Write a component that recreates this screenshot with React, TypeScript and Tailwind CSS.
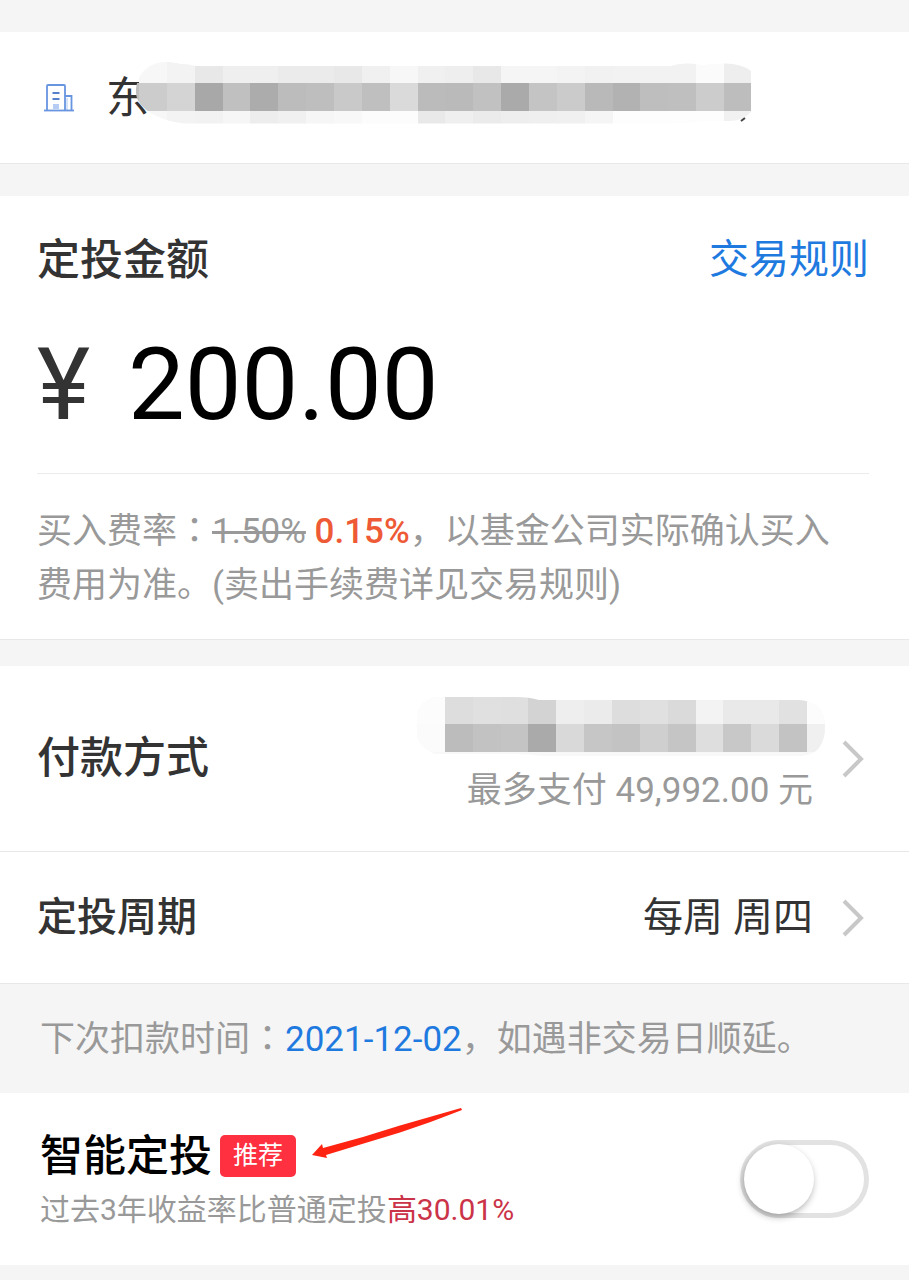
import React, { useState } from "react";

const NAME_TOP = [
  "#f7f7f7", "#f3f3f3", "#e8e8e8", "#efefef", "#efefef", "#ebebeb", "#ebebeb", "#e8e8e8",
  "#f0f0f0", "#f7f7f7", "#f0f0f0", "#eeeeee", "#e8e8e8", "#f5f5f5", "#f5f5f5", "#f3f3f3",
  "#f1f1f1", "#f2f2f2", "#f2f2f2", "#f2f2f2", "#fbfbfb", "#eeeeee",
];
const NAME_MIDDLE = [
  "#cccccc", "#d4d4d4", "#a8a8a8", "#c0c0c0", "#acacac", "#bcbcbc", "#bebebe", "#c9c9c9",
  "#bfbfbf", "#dadada", "#bbbbbb", "#bababa", "#c1c1c1", "#aaaaaa", "#c4c4c4", "#cbcbcb",
  "#b9b9b9", "#b2b2b2", "#bebebe", "#bfbfbf", "#cccccc", "#bdbdbd",
];
const NAME_BOTTOM = [
  "#f7f7f7", "#f3f3f3", "#f2f2f2", "#f6f6f6", "#ededed", "#f0f0f0", "#f6f6f6", "#f8f8f8",
  "#fcfcfc", "#fcfcfc", "#e9e9e9", "#efefef", "#ebebeb", "#eeeeee", "#efefef", "#f0f0f0",
  "#f5f5f5", "#fdfdfd", "#fdfdfd", "#fdfdfd", "#fdfdfd", "#f1f1f1",
];
const CARD_TOP = [
  "#fcfcfc", "#dddddd", "#e0e0e0", "#dfdfdf", "#d3d3d3", "#eeeeee", "#ebebeb", "#dddddd",
  "#e0e0e0", "#dadada", "#f3f3f3", "#e9e9e9", "#e9e9e9", "#e1e1e1", "#fcfcfc",
];
const CARD_MIDDLE = [
  "#fbfbfb", "#bcbcbc", "#c2c2c2", "#c4c4c4", "#aaaaaa", "#d9d9d9", "#c6c6c6", "#c3c3c3",
  "#cfcfcf", "#c5c5c5", "#dedede", "#c8c8c8", "#dadada", "#c3c3c3", "#f0f0f0",
];

type MosaicRowProps = { colors: string[]; x: number; y: number; height: number };

const MosaicRow: React.FC<MosaicRowProps> = ({ colors, x, y, height }) => (
  <g shapeRendering="crispEdges">
    {colors.map((color, i) => (
      <rect key={i} x={x + i * 27.86} y={y} width={28.5} height={height} fill={color} />
    ))}
  </g>
);

const MaskedName: React.FC = () => (
  <svg className="-ml-3.5 shrink-0" width="620" height="76" viewBox="0 0 620 76" aria-hidden="true">
    <clipPath id="maskedName">
      <path d="M31 2C39 2 43 4 48 4Q54 4 60 6H536Q544 3 554 3.500Q562 3.500 568 5.500Q574 3.500 588 3.500Q606 3 616 11V52Q608 61 594 61H570Q550 63.500 530 63.500H50C42 63 26 60 14 52C6 46 1 40 1 32C1 14 14 2 31 2Z" />
    </clipPath>
    <g clipPath="url(#maskedName)">
      <MosaicRow colors={NAME_TOP} x={4} y={0} height={23} />
      <MosaicRow colors={NAME_MIDDLE} x={4} y={23} height={28} />
      <MosaicRow colors={NAME_BOTTOM} x={4} y={51} height={13} />
      <rect x="0" y="23" width="4" height="28" fill="#bcbcbc" />
    </g>
    <path d="M606 61L610 58" stroke="#444" strokeWidth="2" />
  </svg>
);

const MaskedCard: React.FC = () => (
  <svg className="mb-2" width="408" height="62" viewBox="0 0 408 62" aria-hidden="true">
    <clipPath id="maskedCard">
      <path d="M18 3H98Q112 3 122 6H382Q408 8 408 32Q408 60 385 62H125Q112 60 98 60H18Q0 52 0 40V20Q4 6 18 3Z" />
    </clipPath>
    <g clipPath="url(#maskedCard)">
      <rect width="408" height="62" fill="#f8f8f8" />
      <MosaicRow colors={CARD_TOP} x={0} y={0} height={30} />
      <MosaicRow colors={CARD_MIDDLE} x={0} y={30} height={28} />
    </g>
  </svg>
);

const BuildingIcon: React.FC = () => (
  <svg className="shrink-0" width="30" height="30" viewBox="0 0 30 30" fill="none" aria-hidden="true">
    <rect x="9" y="21" width="6" height="5" fill="#b5cdf5" />
    <path d="M3 27V3Q3 2 4 2H20Q21 2 21 3V27" stroke="#6795df" strokeWidth="1.800" />
    <path d="M21 13H27.500V27" stroke="#6795df" strokeWidth="1.800" />
    <path d="M23 15V27" stroke="#c9daf8" strokeWidth="1.500" />
    <path d="M0 27.500H30" stroke="#6795df" strokeWidth="1.800" />
    <path d="M8.500 10H15.500M8.500 16H15.500" stroke="#5480cc" strokeWidth="1.800" />
  </svg>
);

const Chevron: React.FC = () => (
  <svg className="shrink-0" width="24" height="40" viewBox="0 0 24 40" fill="none" aria-hidden="true">
    <path d="M3 3L20 20L3 37" stroke="#c8c8c8" strokeWidth="4" />
  </svg>
);

// 居中的全角冒号
const Colon: React.FC = () => (
  <span lang="zh-TW" className="font-[Roboto,'Noto_Sans_CJK_TC',sans-serif]">
    ：
  </span>
);

const App: React.FC = () => {
  const [amount, setAmount] = useState("200.00");
  const [smart, setSmart] = useState(false);

  return (
    <main
      lang="zh-CN"
      className="min-h-screen bg-[#f5f5f5] pt-8 font-[Roboto,'Noto_Sans_CJK_SC',sans-serif] text-[#333]"
    >
      <header className="flex h-[132px] items-center border-b border-[#e8e8e8] bg-white pl-11">
        <BuildingIcon />
        <h1 className="ml-8 flex items-center overflow-hidden text-[43px] leading-[64px]">
          东
          <MaskedName />
        </h1>
      </header>

      <section className="mt-8 border-b border-[#e8e8e8] bg-white pt-8 pr-10 pb-[26px] pl-[37px]">
        <div className="flex items-center justify-between leading-[64px]">
          <label htmlFor="amount" className="text-[43px] font-medium">
            定投金额
          </label>
          <a href="#rules" className="text-[40px] text-[#1f7ae0]">
            交易规则
          </a>
        </div>
        <div className="mt-[33px] flex items-center gap-[38px] text-[101px] leading-[120px]">
          <span>¥</span>
          <input
            id="amount"
            type="text"
            inputMode="decimal"
            className="h-[120px] w-full min-w-0 flex-1 text-black outline-none"
            value={amount}
            onChange={(e) => setAmount(e.target.value)}
          />
        </div>
        <p className="mt-7 border-t border-[#ebebeb] pt-[31px] text-[35px] leading-[54px] text-[#999]">
          买入费率
          <Colon />
          <del>1.50%</del> <strong className="font-medium text-[#ee5a35]">0.15%</strong>
          ，以基金公司实际确认买入
          <br />
          费用为准。(卖出手续费详见交易规则)
        </p>
      </section>

      <section className="mt-[26px] bg-white">
        <button
          type="button"
          className="flex h-[186px] w-full items-center border-b border-[#e8e8e8] pr-11 pl-[37px] text-left"
        >
          <span className="text-[43px] font-medium">付款方式</span>
          <span className="ml-auto flex flex-col items-end pb-1.5">
            <MaskedCard />
            <span className="mr-3 text-[35px] leading-[54px] text-[#999]">最多支付 49,992.00 元</span>
          </span>
          <span className="ml-4">
            <Chevron />
          </span>
        </button>
        <button
          type="button"
          className="flex h-[132px] w-full items-center border-b border-[#e8e8e8] pr-11 pl-[37px]"
        >
          <span className="text-[40px] font-medium">定投周期</span>
          <span className="ml-auto text-[40px]">每周 周四</span>
          <span className="ml-7">
            <Chevron />
          </span>
        </button>
      </section>

      <p className="px-10 pt-[29px] pb-[26px] text-[35px] leading-[54px] text-[#999]">
        下次扣款时间
        <Colon />
        <time dateTime="2021-12-02" className="text-[#1f7ae0]">
          2021-12-02
        </time>
        ，如遇非交易日顺延。
      </p>

      <section className="flex h-[172px] items-center justify-between bg-white px-10">
        <div className="pt-0.5">
          <div className="relative flex items-center">
            <label htmlFor="smart" className="text-[43px] leading-[60px] font-medium text-black">
              智能定投
            </label>
            <span className="ml-2 rounded-[5px] bg-[#ff3040] px-[13px] text-[25px] leading-[42px] text-white">
              推荐
            </span>
            <svg
              className="absolute -top-5 left-[272px]"
              width="152"
              height="54"
              viewBox="0 0 152 54"
              aria-hidden="true"
            >
              <path
                d="M0 49L10 38L11 42Q50 32 88 19.500L149 2L150 4Q120 16 88 26.500Q50 38 14 49L15 52Z"
                fill="#ff2412"
              />
            </svg>
          </div>
          <p className="text-[30px] leading-[48px] text-[#999]">
            过去3年收益率比普通定投<span className="text-[#cb3348]">高30.01%</span>
          </p>
        </div>
        <span className="relative flex">
          <input
            id="smart"
            type="checkbox"
            role="switch"
            className="peer h-[78px] w-[129px] cursor-pointer appearance-none rounded-full border-[5px] border-[#e2e2e2] bg-white checked:border-[#1f7ae0] checked:bg-[#1f7ae0]"
            checked={smart}
            onChange={(e) => setSmart(e.target.checked)}
          />
          <span className="pointer-events-none absolute top-1 left-1 size-[70px] rounded-full bg-white shadow-[-1px_3px_7px_rgba(0,0,0,0.3)] peer-checked:left-[55px]" />
        </span>
      </section>
    </main>
  );
};

export default App;
